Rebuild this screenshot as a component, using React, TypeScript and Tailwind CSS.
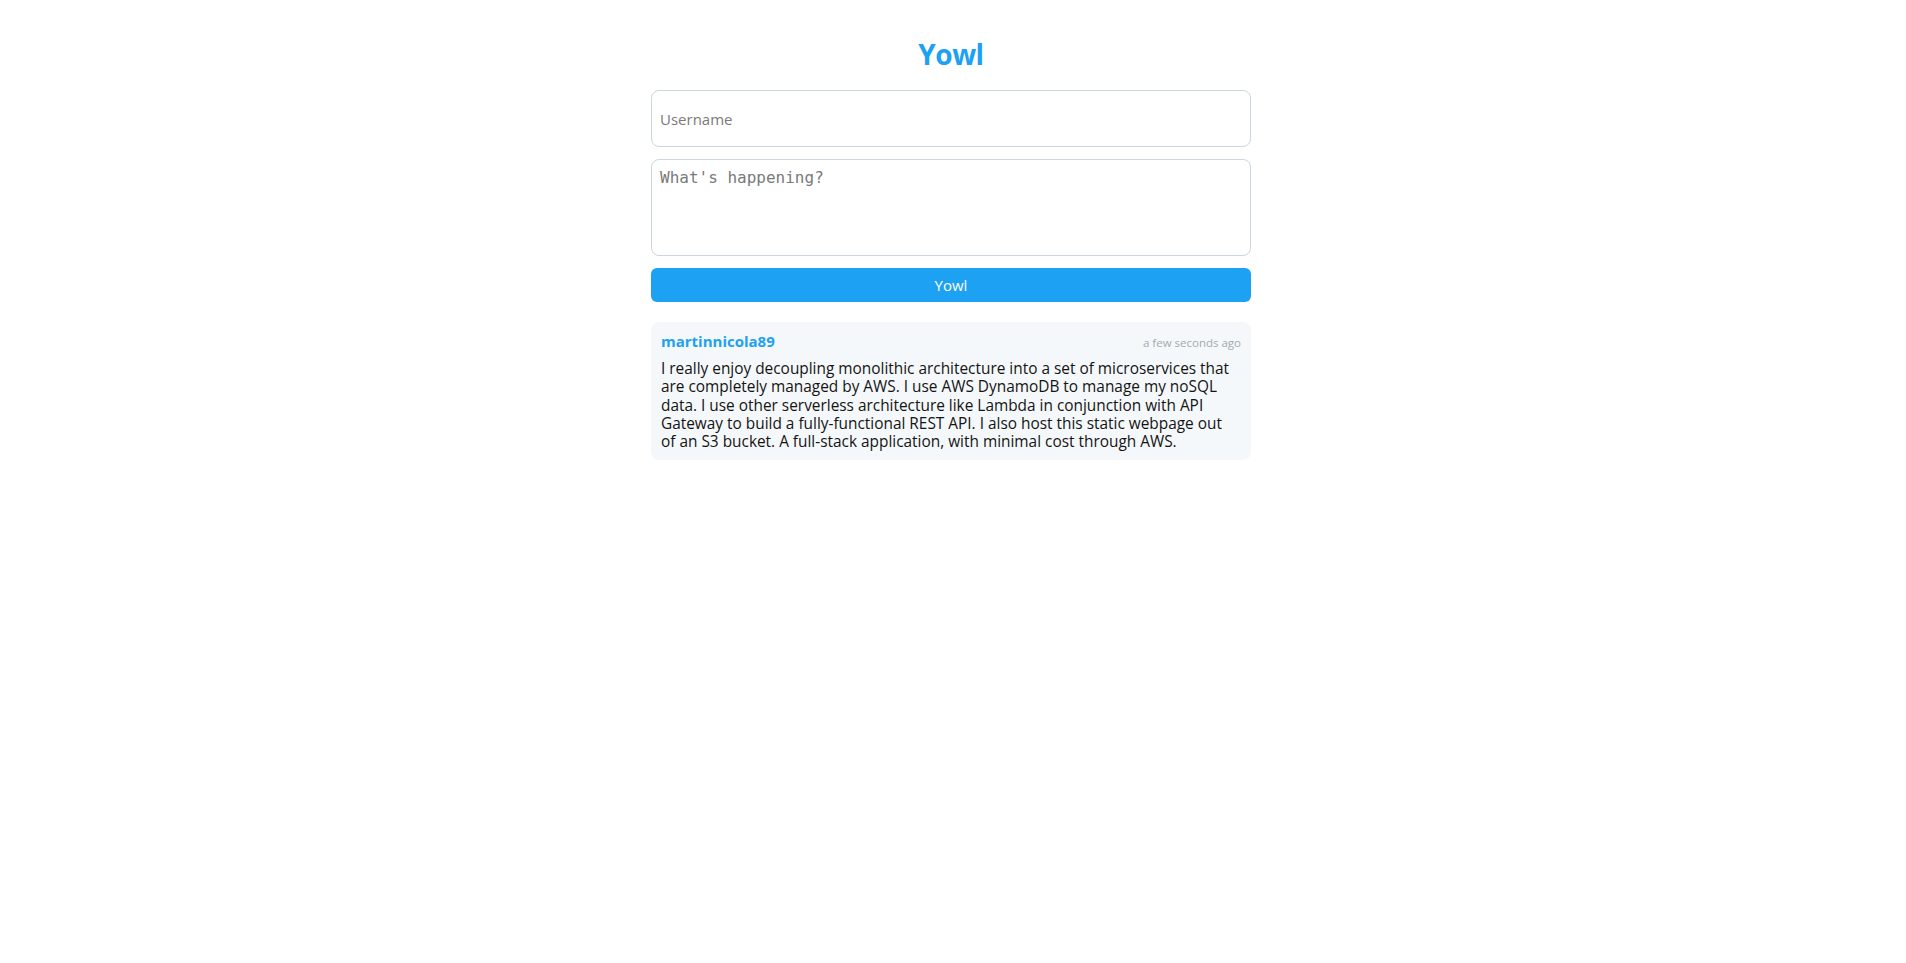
import React, { useState } from 'react';

const posts = [
  {
    user: 'martinnicola89',
    time: 'a few seconds ago',
    lines: [
      'I really enjoy decoupling monolithic architecture into a set of microservices that',
      'are completely managed by AWS. I use AWS DynamoDB to manage my noSQL',
      'data. I use other serverless architecture like Lambda in conjunction with API',
      'Gateway to build a fully-functional REST API. I also host this static webpage out',
      'of an S3 bucket. A full-stack application, with minimal cost through AWS.',
    ],
  },
];

const App = () => {
  const [username, setUsername] = useState('');
  const [text, setText] = useState('');

  return (
    <div className="min-h-screen bg-white font-['Open_Sans',sans-serif] flex justify-center pr-[4px]">
      <div className="w-[600px] pt-[36px]">
        <h1 className="text-center text-[28px] leading-[36px] font-bold text-[#1da1f2] tracking-[-0.5px]">Yowl</h1>

        <input
          type="text"
          value={username}
          onChange={(e) => setUsername(e.target.value)}
          placeholder="Username"
          className="mt-[18px] block w-full h-[57px] px-2 rounded-lg border border-[#ccd6dd] text-[15px] outline-none placeholder:text-[#7a7a7a]"
        />

        <textarea
          value={text}
          onChange={(e) => setText(e.target.value)}
          placeholder="What's happening?"
          className="mt-3 block w-full h-[97px] px-2 py-[8px] rounded-lg border border-[#ccd6dd] font-['DejaVu_Sans_Mono',monospace] text-[16px] leading-[20px] resize-none outline-none placeholder:text-[#7a7a7a]"
        />

        <button className="mt-3 block w-full h-[34px] rounded-md bg-[#1da1f2] text-white text-[15px]">
          Yowl
        </button>

        <div className="mt-5 flex flex-col">
          {posts.map((p, i) => (
            <div key={i} className="bg-[#f5f8fa] rounded-lg px-[10px] pt-[9px] pb-[9px]">
              <div className="flex justify-between items-baseline">
                <span className="text-[#1da1f2] font-bold text-[15px] leading-[20px]">{p.user}</span>
                <span className="text-[#a0aab2] text-[11.5px]">{p.time}</span>
              </div>
              <p className="mt-[9px] text-[15.4px] leading-[18.2px] text-[#141414] whitespace-nowrap">
                {p.lines.map((l, j) => (
                  <React.Fragment key={j}>
                    {l}
                    {j < p.lines.length - 1 && <br />}
                  </React.Fragment>
                ))}
              </p>
            </div>
          ))}
        </div>
      </div>
    </div>
  );
};

export default App;
